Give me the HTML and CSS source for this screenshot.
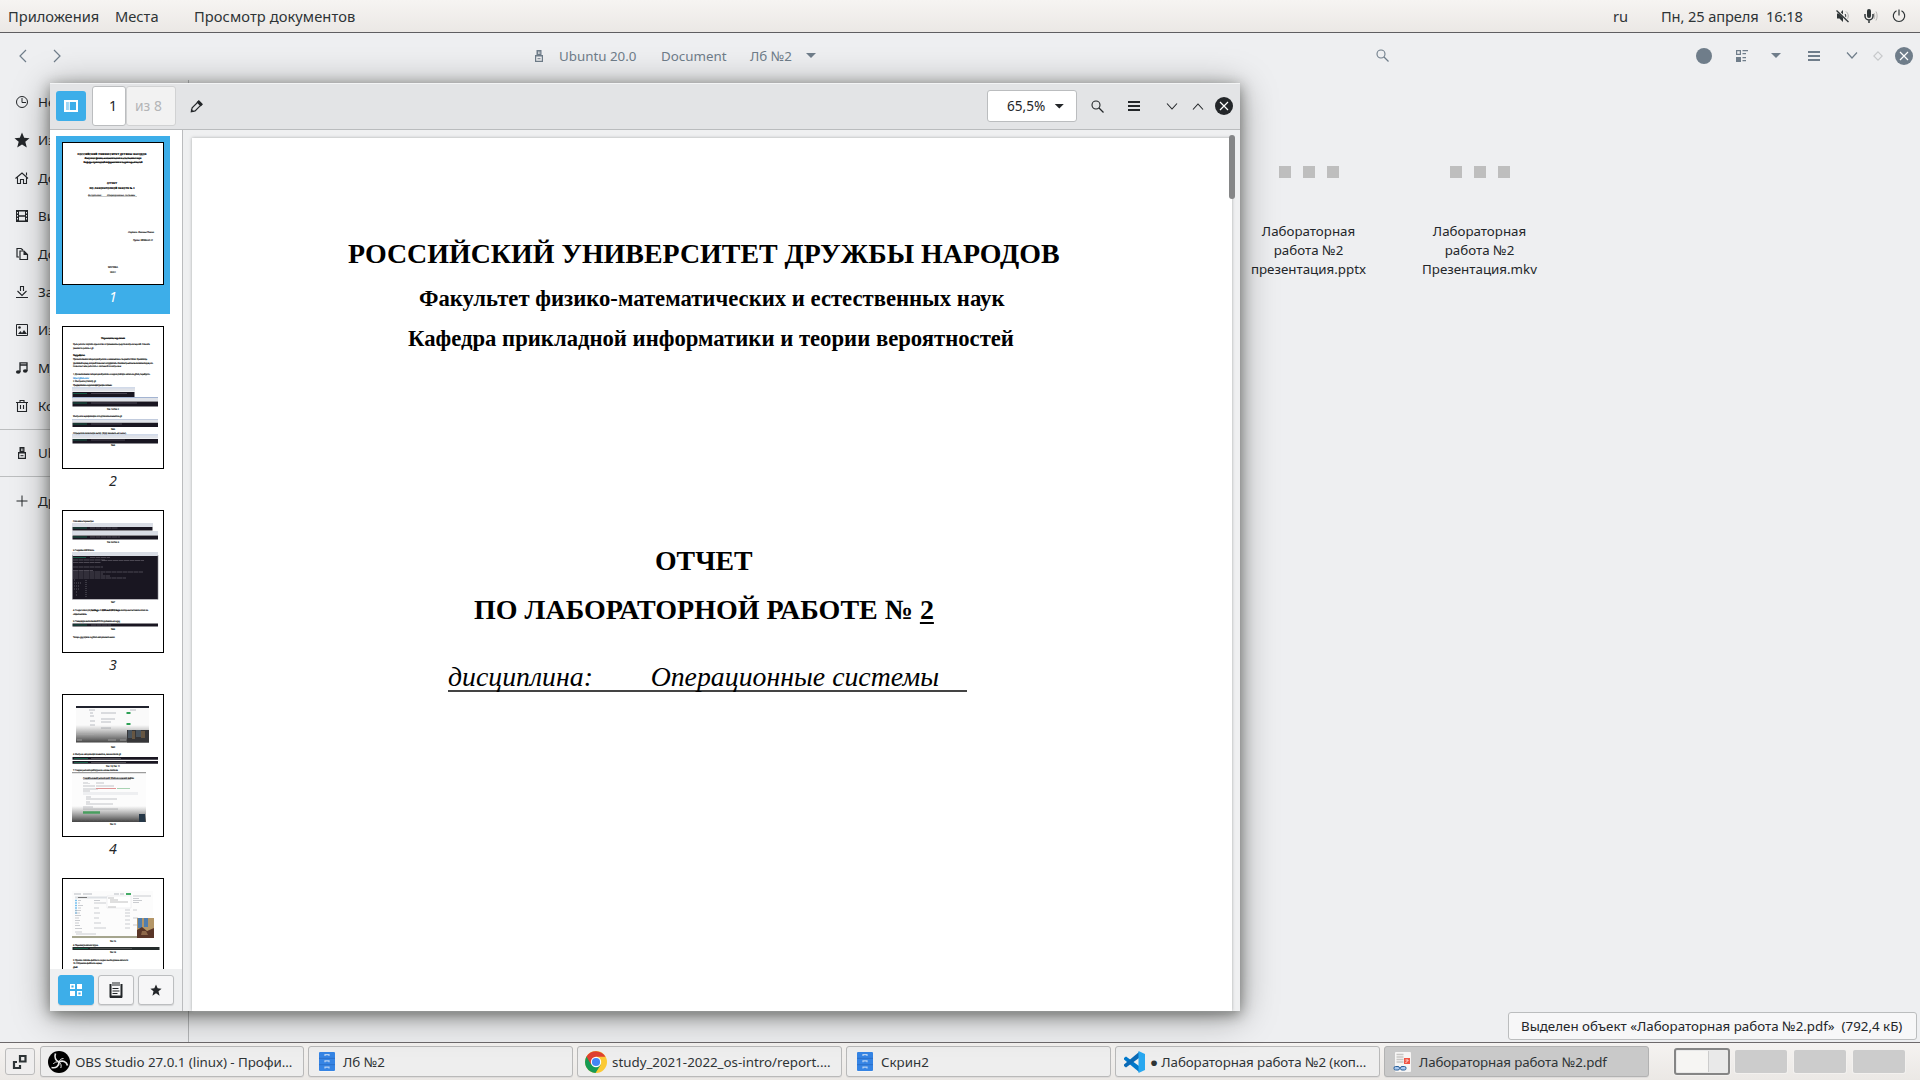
FILE: index.html
```html
<!DOCTYPE html>
<html lang="ru">
<head>
<meta charset="utf-8">
<title>Просмотр документов</title>
<link rel="stylesheet" href="styles.css">
</head>
<body>
<div class="desktop">
  <header class="top-panel">
    <span class="menu-apps">Приложения</span>
    <span class="menu-places">Места</span>
    <span class="menu-active">Просмотр документов</span>
    <span class="spacer"></span>
    <span class="lang">ru</span>
    <span class="clock">Пн, 25 апреля&nbsp; 16:18</span>
    <svg class="tray" width="14" height="14" viewBox="0 0 14 14"><path d="M1 4.500h2.500L7 1v12L3.500 9.500H1z" fill="#2e3436"/><path d="M9 5c1 1.200 1 2.800 0 4" fill="none" stroke="#2e3436"/><path d="M10 2.500c3 2.500 3 6.500 0 9" fill="none" stroke="#aaa"/><path d="M1 1l12 12" stroke="#f0eeec" stroke-width="2.400"/><path d="M.5 1.500l12 11.500" stroke="#2e3436" stroke-width="1.300"/></svg>
    <svg class="tray tray-mic" width="14" height="14" viewBox="0 0 14 14"><rect x="3" y="0" width="4" height="9" rx="2" fill="#2e3436"/><path d="M1 5v2a4 4 0 0 0 8 0V5M5 11v3" fill="none" stroke="#2e3436" stroke-width="1.500"/><path d="M10 4c1 2 1 4 0 6M12 2.500c1.500 3 1.500 6 0 9" fill="none" stroke="#b5b3b1"/></svg>
    <svg class="tray tray-power" width="14" height="14" viewBox="0 0 14 14"><path d="M4.500 1.700a5.700 5.700 0 1 0 5 0M7 .5v6" fill="none" stroke="#2e3436" stroke-width="1.200"/></svg>
  </header>

  <main class="workspace">
    <div class="fm-header">
      <svg class="nav-back" width="8" height="14" viewBox="0 0 8 14"><path d="M7 1L1 7l6 6" fill="none" stroke="#6f7d8a" stroke-width="1.200"/></svg>
      <svg class="nav-fwd" width="8" height="14" viewBox="0 0 8 14"><path d="M1 1l6 6-6 6" fill="none" stroke="#6f7d8a" stroke-width="1.200"/></svg>
      <svg class="crumb-usb" width="8" height="12" viewBox="0 0 8 12"><path d="M1.500 0h5v5H8v7H0V5h1.500zM3 1.500V4h.7V1.500zm1.500 0V4h.7V1.500zM1.200 6.500v4.300h5.600V6.500z" fill="#6f7d8a" fill-rule="evenodd"/><path d="M2.500 8.700h3" stroke="#6f7d8a"/></svg>
      <span class="crumb crumb-root">Ubuntu 20.0</span>
      <span class="crumb crumb-doc">Document</span>
      <span class="crumb crumb-cur">Лб №2</span>
      <i class="caret"></i>
      <span class="spacer"></span>
      <svg class="fm-search" width="13" height="13" viewBox="0 0 13 13"><circle cx="5" cy="5" r="4" fill="none" stroke="#6f7d8a" stroke-width="1.100"/><path d="M8 8l4.500 4.500" stroke="#6f7d8a" stroke-width="1.200"/></svg>
      <i class="fm-dot"></i>
      <svg class="fm-view" width="12" height="12" viewBox="0 0 12 12"><path d="M.6.6h3.800v3.800H.6z" fill="none" stroke="#6f7d8a" stroke-width="1.200"/><path d="M0 7h5v5H0z" fill="#6f7d8a"/><path d="M6.500.6H12M6.500 3.600H10M6.500 7.600H10M6.500 10.600H10" stroke="#6f7d8a" stroke-width="1.100"/></svg>
      <i class="caret fm-caret"></i>
      <svg class="fm-menu" width="12" height="10" viewBox="0 0 12 10"><path d="M0 0h12v2H0zM0 4h12v2H0zM0 8h12v2H0z" fill="#6f7d8a"/></svg>
      <svg class="fm-min" width="12" height="7" viewBox="0 0 12 7"><path d="M1 .5l5 5.500 5-5.500" fill="none" stroke="#6f7d8a" stroke-width="1.200"/></svg>
      <svg class="fm-max" width="10" height="10" viewBox="0 0 10 10"><path d="M5 .8L9.200 5 5 9.200.8 5z" fill="none" stroke="#c6c8ca" stroke-width="1.100"/></svg>
      <svg class="fm-close" width="18" height="18" viewBox="0 0 18 18"><circle cx="9" cy="9" r="9" fill="#6f7d8a"/><path d="M5 5l8 8M13 5l-8 8" stroke="#fff" stroke-width="1.200"/></svg>
    </div>
    <div class="fm-body">
      <nav class="places">
        <div class="place"><svg viewBox="0 0 16 16"><circle cx="8" cy="8" r="5.500" fill="none" stroke="#232629"/><path d="M8 4v4.500h4" fill="none" stroke="#232629"/></svg>Недавние</div>
        <div class="place"><svg viewBox="0 0 16 16"><path d="M8 .5l2.200 5.300 5.300.4-4.200 3.600 1.500 5.700L8 12.400l-4.800 3.100 1.500-5.700L.5 6.200l5.300-.4z" fill="#232629"/></svg>Избранные</div>
        <div class="place"><svg viewBox="0 0 16 16"><path d="M1.500 8.500L8 3l6 5.500M3.500 7.500v6h3v-4h3v4h3v-6M12.500 2.500v3" fill="none" stroke="#232629" stroke-width="1.100"/></svg>Домашняя папка</div>
        <div class="place"><svg viewBox="0 0 16 16"><path d="M2 2h12v12H2zM5 3.500v3.700h6V3.500zM5 8.800v3.700h6V8.800zM3 4v1.500h1V4zm0 3v1.500h1V7zm0 3v1.500h1V10zm9-6v1.500h1V4zm0 3v1.500h1V7zm0 3v1.500h1V10z" fill="#232629" fill-rule="evenodd"/></svg>Видео</div>
        <div class="place"><svg viewBox="0 0 16 16"><path d="M5 11H3V2.500h4L9 4M6 5h4l3.500 3.500v5H6z" fill="none" stroke="#232629" stroke-width="1.200"/><path d="M9.500 5v4H14z" fill="#232629"/></svg>Документы</div>
        <div class="place"><svg viewBox="0 0 16 16"><path d="M2 13.500h12M3.500 7L8 11.500 12.500 7M6.500 7V2.500h3V7" fill="none" stroke="#232629" stroke-width="1.100"/></svg>Загрузки</div>
        <div class="place"><svg viewBox="0 0 16 16"><path d="M2.500 2.500h11v11h-11z" fill="none" stroke="#232629"/><path d="M4 12l2.500-3L8 11l2-3 3 4z" fill="#232629"/><circle cx="5.500" cy="5.500" r="1.300" fill="#232629"/></svg>Изображения</div>
        <div class="place"><svg viewBox="0 0 16 16"><path d="M6 12V2.800h7V11M6 5h7" fill="none" stroke="#232629" stroke-width="1.300"/><ellipse cx="4.200" cy="12" rx="2.300" ry="1.800" fill="#232629"/><ellipse cx="11.200" cy="11" rx="2.300" ry="1.800" fill="#232629"/></svg>Музыка</div>
        <div class="place"><svg viewBox="0 0 16 16"><path d="M2 4.500h12M3.500 4.500v9h9v-9M6 4V2.500h4V4M6.500 7v4M9.500 7v4" fill="none" stroke="#232629" stroke-width="1.100"/></svg>Корзина</div>
        <div class="place place-drive"><svg viewBox="0 0 16 16"><path d="M5.500 2h5v5H12v7H4V7h1.500zM7 3.500V6h.7V3.500zm1.500 0V6h.7V3.500zM5.200 8.500v4.300h5.600V8.500z" fill="#232629" fill-rule="evenodd"/><path d="M6.500 10.700h3" stroke="#232629"/></svg>Ubuntu 20.0</div>
        <div class="place place-other"><svg viewBox="0 0 16 16"><path d="M2.500 8h11M8 2.500v11" stroke="#232629"/></svg>Другие места</div>
      </nav>
      <section class="files">
        <div class="file"><div class="loading"><i></i><i></i><i></i></div>Лабораторная<br>работа №2<br>презентация.pptx</div>
        <div class="file"><div class="loading"><i></i><i></i><i></i></div>Лабораторная<br>работа №2<br>Презентация.mkv</div>
      </section>
    </div>
    <div class="status">Выделен объект «Лабораторная работа №2.pdf»&nbsp; (792,4 кБ)</div>
  </main>

  <footer class="bottom-panel">
    <div class="show-desktop"><svg width="16" height="16" viewBox="0 0 16 16"><path d="M8 2h5.500v5.500H8z" fill="none" stroke="#2e3436" stroke-width="2.200"/><path d="M5 8H2v6h6v-3" fill="none" stroke="#2e3436" stroke-width="2.200"/></svg></div>
    <div class="task task-first">
      <svg width="22" height="22" viewBox="0 0 22 22"><circle cx="11" cy="11" r="11" fill="#000"/><path d="M7.500 2.500c-1.500 4 .5 7.300 3.500 8.500M11 11c3.500-2 7.500-.5 8.500 3.500M11 11c.3 4-3 6.500-7.500 5.500" fill="none" stroke="#e8e8e8" stroke-width="1.700"/><path d="M11 11c.5-2 2-3.500 4.500-3.500M11 11c-2.500-.5-4.500.2-5.700 2M11 11c2 1.500 2.700 3.500 1.800 6" fill="none" stroke="#e8e8e8" stroke-width="1"/></svg>
      <span class="t-obs">OBS Studio 27.0.1 (linux) - Профи...</span></div>
    <div class="task">
      <svg width="22" height="22" viewBox="0 0 22 22"><rect x="3" y="1" width="16" height="20" fill="#f5f5f5"/><rect x="3" y="1" width="16" height="19" rx="1" fill="#3584e4"/><path d="M3 7.300h16M3 13.700h16" stroke="#2a6fc9"/><path d="M9 5V3.600h4V5M9 11.300V9.900h4v1.400M9 17.600v-1.400h4v1.400" fill="none" stroke="#b8d2f2" stroke-width="1.200"/></svg>
      <span>Лб №2</span></div>
    <div class="task">
      <svg width="22" height="22" viewBox="0 0 22 22"><circle cx="11" cy="11" r="11" fill="#fbc934"/><path d="M11 11L1.500 5.500A11 11 0 0 0 10.500 22l5.200-8.300z" fill="#169b55"/><path d="M1.500 5.500A11 11 0 0 1 20.500 5.700H11l-4.800 8z" fill="#df4032"/><circle cx="11" cy="11" r="5.200" fill="#fff"/><circle cx="11" cy="11" r="4.100" fill="#4486f4"/></svg>
      <span class="t-study">study_2021-2022_os-intro/report....</span></div>
    <div class="task">
      <svg width="22" height="22" viewBox="0 0 22 22"><rect x="3" y="1" width="16" height="20" fill="#f5f5f5"/><rect x="3" y="1" width="16" height="19" rx="1" fill="#3584e4"/><path d="M3 7.300h16M3 13.700h16" stroke="#2a6fc9"/><path d="M9 5V3.600h4V5M9 11.300V9.900h4v1.400M9 17.600v-1.400h4v1.400" fill="none" stroke="#b8d2f2" stroke-width="1.200"/></svg>
      <span>Скрин2</span></div>
    <div class="task">
      <svg width="22" height="22" viewBox="0 0 22 22"><path d="M1 7l2-1.500L16 15v6L1 8.500z" fill="#0179cb"/><path d="M1 15l2 1.500L16 7V1L1 13.500z" fill="#0a6ab6"/><path d="M15.500 0L22 3v16l-6.500 3z" fill="#29a8f0"/></svg>
      <span class="t-code">● Лабораторная работа №2 (коп...</span></div>
    <div class="task task-active">
      <svg width="22" height="22" viewBox="0 0 22 22"><rect x="3" y="1" width="16" height="20" rx="1" fill="#f6f5f4"/><path d="M4.500 3.500h7M4.500 6h7M4.500 8.500h7M4.500 11h7" stroke="#c8c6c4" stroke-width="1.500"/><rect x="12" y="7" width="6" height="6" fill="#f05545"/><path d="M13.500 12l3-3M13.500 9h2.500" stroke="#fff" stroke-width=".8"/><rect x="2" y="15.500" width="5.500" height="3.500" rx="1.500" fill="#a9c8ee" stroke="#2a6099"/><rect x="8.500" y="15.500" width="5.500" height="3.500" rx="1.500" fill="#a9c8ee" stroke="#2a6099"/></svg>
      <span class="t-pdf">Лабораторная работа №2.pdf</span></div>
    <div class="pager">
      <div class="desk desk-active"><i></i></div><div class="desk"></div><div class="desk"></div><div class="desk"></div>
    </div>
  </footer>

  <section class="viewer">
    <div class="toolbar">
      <div class="side-toggle"><svg width="14" height="12" viewBox="0 0 14 12"><path d="M1 1h12v10H1z" fill="none" stroke="#fff" stroke-width="2"/><path d="M2 2h2.500v8H2z" fill="#9fd5f5"/><path d="M5.200 1v10" stroke="#fff" stroke-width="1.200"/></svg></div>
      <div class="page-num">1</div>
      <div class="page-total">из 8</div>
      <svg class="pencil" width="13" height="13" viewBox="0 0 14 14"><path d="M1.500 12.500l.8-4L8.500 2.300l3.200 3.200-6.200 6.200z" fill="none" stroke="#232629" stroke-width="1.300"/><path d="M7 2.500L9.500 0 14 4.500 11.500 7zM1 13v-3.500L4.500 13z" fill="#232629"/></svg>
      <span class="spacer"></span>
      <div class="zoom"><span>65,5%</span><i class="caret caret-dark"></i></div>
      <svg class="v-search" width="13" height="13" viewBox="0 0 13 13"><circle cx="5" cy="5" r="4" fill="none" stroke="#232629" stroke-width="1.100"/><path d="M8 8l4.500 4.500" stroke="#232629" stroke-width="1.200"/></svg>
      <svg class="v-menu" width="12" height="10" viewBox="0 0 12 10"><path d="M0 0h12v2H0zM0 4h12v2H0zM0 8h12v2H0z" fill="#232629"/></svg>
      <svg class="v-min" width="12" height="7" viewBox="0 0 12 7"><path d="M1 .5l5 5.500 5-5.500" fill="none" stroke="#232629" stroke-width="1.100"/></svg>
      <svg class="v-max" width="12" height="7" viewBox="0 0 12 7"><path d="M1 6.500L6 1l5 5.500" fill="none" stroke="#232629" stroke-width="1.100"/></svg>
      <svg class="v-close" width="18" height="18" viewBox="0 0 18 18"><circle cx="9" cy="9" r="9" fill="#232629"/><path d="M5 5l8 8M13 5l-8 8" stroke="#fff" stroke-width="1.200"/></svg>
    </div>
    <div class="viewer-body">
      <aside class="thumbs">
        <div class="thumb-list">
          <div class="thumb thumb-current">
            <svg viewBox="0 0 102 143" class="sheet"><g class="mini mid bold"><text x="50" y="13" textLength="69">РОССИЙСКИЙ УНИВЕРСИТЕТ ДРУЖБЫ НАРОДОВ</text><text x="51" y="17" textLength="57">Факультет физико-математических и естественных наук</text><text x="51" y="21" textLength="59">Кафедра прикладной информатики и теории вероятностей</text><text x="50" y="42" textLength="10">ОТЧЕТ</text><text x="50" y="47" textLength="45">ПО ЛАБОРАТОРНОЙ РАБОТЕ № 2</text></g><g class="mini ital"><text x="26" y="54" textLength="14">дисциплина:</text><text x="45" y="54" textLength="28">Операционные системы</text><path d="M26 54.500h49" stroke="#777" stroke-width=".4"/><text x="66" y="90.500" textLength="26">Студент: Логинова Полина</text><text x="71" y="98.500" textLength="20">Группа: НКНбд-01-21</text></g><g class="mini mid"><text x="51" y="126" textLength="10">МОСКВА</text><text x="51" y="130.500" textLength="6">2022 г.</text></g></svg>
            <span class="num">1</span>
          </div>
          <div class="thumb">
            <svg viewBox="0 0 102 143" class="sheet"><g class="mini"><text class="bold" x="39" y="13" textLength="24">Управление версиями</text><text x="11" y="19" textLength="77">Цель работы: изучить идеологию и применение средств контроля версий. Освоить</text><text x="11" y="23" textLength="21">умения по работе с git.</text><text class="bold" x="11" y="30" textLength="12">Ход работы:</text><text x="11" y="34" textLength="74">При выполнении лабораторной работы я ознакомилась с теорией и Github. Хранилище</text><text x="11" y="38" textLength="80">удалённый сервер, который позволяет сотрудничать с Вашим проектом нескольким людям, это</text><text x="11" y="41.300" textLength="48">позволяет мне работать с системой и контролем</text><text x="11" y="49" textLength="77">1. Для выполнения лабораторной работы я создала учётную запись на github, перейдя по</text><text class="link" x="11" y="53" textLength="16">https://github.com/</text><text x="11" y="56.300" textLength="23">2. Настроила утилиту git</text><text x="11" y="60.300" textLength="39">Предварительно создала конфигурацию системы</text><text x="45" y="84" textLength="12">Рис. 1 и Рис. 2</text><text x="11" y="91" textLength="49">Настроила верификацию и подписание коммитов git</text><text x="49" y="104" textLength="4">Рис.3</text><text x="11" y="108" textLength="53">Определила начальную ветку. (Буду называть её master)</text><text x="49" y="120" textLength="4">Рис.4</text></g>
            <g class="bar"><path d="M10 62h63M10 71.500h86M10 93.500h86M10 109h86"/></g><path d="M10.500 66h62v5h-62zM10.500 75.500h85.500v5h-85.500zM10.500 96.500h85.500v4.500h-85.500zM10.500 113h85.500v4.500h-85.500z" fill="#191621"/><path d="M10 64h63M10 73.500h86M10 95h86M10 111h86" stroke="#dfe2e8" stroke-width="3"/><path d="M11 67.500h14M11 77h14M11 98h14M11 114h14" stroke="#1b5d48"/><path d="M29 67.500h36M29 77h46M29 98h31M29 114h34" stroke="#696773" stroke-width=".6"/></svg>
            <span class="num">2</span>
          </div>
          <div class="thumb">
            <svg viewBox="0 0 102 143" class="sheet"><g class="mini"><text x="11" y="12" textLength="21">Основные параметры:</text><text x="45" y="33" textLength="12">Рис. 5 и Рис. 6</text><text x="11" y="41" textLength="21">3. Создание SSH Ключа</text><text x="49" y="93" textLength="4">Рис.7</text><text x="11" y="101" textLength="75">4. Создал ключ (id) <tspan class="bold">Settings -&gt; SSH and GPG keys</tspan> скопировал вставила ключ на</text><text x="11" y="104.500" textLength="14">открытом ключе.</text><text x="11" y="112" textLength="47">5. Сгенерирую выполненный PGP и добавляю его в gpg</text><text x="49" y="120" textLength="4">Рис.8</text><text x="11" y="128" textLength="42">Теперь gpg нужно в github авторизовать меня.</text></g>
            <path d="M10 15h81M10 23h86M10 44h86" stroke="#d9dde5" stroke-width="4"/><path d="M10.500 17h80v3.500h-80zM10.500 25.500h85.500v4h-85.500zM10.500 46h85.500v43h-85.500zM10.500 113.500h85.500v3h-85.500z" fill="#191621"/><path d="M10.500 45v44.500H96V45" fill="none" stroke="#85838b" stroke-width=".6"/><path d="M11 18h14M11 27h14M11 47.500h13M11 115h14" stroke="#1b5d48"/><path d="M28 18h28M28 27h30M28 47.500h20M29 115h20M11 50h32M11 52.500h28M40 50.500h42M11 57h30M11 60.500h20M11 62h70M11 64h30M11 66h37M11 68h53" stroke="#6e6b76" stroke-width=".6" stroke-dasharray="5 .5"/><path d="M12 70h1M12 73h7M12 76h6M12 79h5M14 82h2M14 85h2M24 70v18" stroke="#8c8991" stroke-width=".6" stroke-dasharray="1 1"/></svg>
            <span class="num">3</span>
          </div>
          <div class="thumb">
            <svg viewBox="0 0 102 143" class="sheet"><defs><linearGradient id="fade" x2="0" y2="1"><stop offset="0" stop-color="#666" stop-opacity="0"/><stop offset="1" stop-color="#444"/></linearGradient></defs><path d="M14 12h73v36.500H14z" fill="#fafafa"/><path d="M14 13h73" stroke="#20222d" stroke-width="2"/><path d="M27 16h6M39 19h15M39 25h14M39 28h10M28 19h3M28 22h4M28 27h5M39 34h10M28 31h5M68 16h6" stroke="#a9adb5" stroke-width=".8"/><path d="M64.500 19h4M64.500 30h4" stroke="#2da055" stroke-width="2"/><path d="M14 31h73v17.500H14z" fill="url(#fade)"/><path d="M65 36h22v12.500H65z" fill="#363638"/><path d="M66 36h4v8h-4zM74 36h5v7h-5z" fill="#49545e"/><path d="M70 37h3v8h-3zM79 37h4v7h-4z" fill="#665642"/><path d="M15 40h17M15 46h5M46 46h8M58 46h6" stroke="#aaa" stroke-width=".8"/><g class="mini"><text x="49" y="54" textLength="4">Рис.9</text><text x="11" y="61" textLength="48">6. Настрою авторизации коммитов, связав ключи git</text><text x="44" y="73" textLength="14">Рис. 10, Рис. 11</text><text x="11" y="77" textLength="45">7. Создаю репозиторий курса на основе шаблона</text></g><path d="M10.500 63h85.500v2.800h-85.500zM10.500 67h85.500v2.800h-85.500z" fill="#191621"/><path d="M12 64.500h14M12 68.500h14" stroke="#1b5d48"/><path d="M29 64.500h30M29 68.500h35" stroke="#777" stroke-width=".6"/><path d="M10 78.500h74V128H10z" fill="#fcfcfc"/><path d="M10 78.700h74" stroke="#858585"/><text class="mini" x="21" y="84.500" textLength="51">Создайте новый репозиторий. Шаблон содержит файлы</text><path d="M21 85.500h48M21 89h5M34 89h8M21 92h12M34 92h18M21 95h15M21 97h7M24 103h5M24 105h31M24 108h4M24 110h27M21 113h10M21 115h35M27 89v1" stroke="#aaadb3" stroke-width=".7"/><path d="M21 99.500h55" stroke="#eeeff1" stroke-width="3"/><path d="M34 94.500h20" stroke="#df9595"/><path d="M55 94.500h13" stroke="#a9d3b3"/><path d="M10 112h74v16H10z" fill="url(#fade)"/><path d="M21 118.500h17" stroke="#499e5f" stroke-width="2.500"/><path d="M77 120h6v8h-6z" fill="#253747"/><path d="M12 126.500h64" stroke="#555" stroke-dasharray="3 1"/><text class="mini" x="48" y="131" textLength="6">Рис. 12</text></svg>
            <span class="num">4</span>
          </div>
          <div class="thumb">
            <svg viewBox="0 0 102 143" class="sheet"><path d="M10 13h81v48H10z" fill="#fcfcfc"/><path d="M12 16h7M21 16h9M52 16h5M58 16h4" stroke="#b8bcc2"/><path d="M64 16h5" stroke="#259d4c" stroke-width="1.700"/><path d="M13 19.500h32" stroke="#dde0e4" stroke-width="2"/><path d="M16 19.500h9" stroke="#777"/><path d="M13 22.500h2M13 25h2M13 27.500h2M13 30h2M13 32.500h2M13 35h2" stroke="#79c1ef" stroke-width="1.500"/><path d="M16 22.500h3M16 25h2M16 27.500h5M16 30h3M13 32.500h6M13 35h5M13 37.500h6M13 40h4M13 42.500h5M13 45h4M13 47.500h5M13 50.500h7M13 54h7M32 22.500h6M32 25h12M32 30h5M32 35h6M32 40h5M32 45h7M32 50h12M63 32h5M63 35h5M63 38h5M63 42h5M63 46h5M63 50h5M71 18h18M71 20.500h6M71 22.500h9M71 24.500h6M71 32h4M71 40h5M71 47h5M14 56h20" stroke="#b5b8bd" stroke-width=".7"/><path d="M45 18h24v12H45z" fill="#fff" stroke="#e2e3e5" stroke-width=".5"/><path d="M46 20h6M48 22h8M48 24h18M46 29h8" stroke="#999" stroke-width=".6"/><path d="M10 58h65v2H10z" fill="#a5a58e"/><path d="M75 40h17v20H75z" fill="#b49667"/><path d="M76 40h4v10h-4zM82 40h4v9h-4z" fill="#507eae"/><path d="M75 52l5-3 5 4 7-3v10H75z" fill="#593527"/><path d="M80 53h4l2 4h-7z" fill="#8e6849"/><g class="mini"><text x="48" y="64" textLength="6">Рис. 13</text><text x="11" y="68" textLength="25">8. Перехожу в каталог курса</text><text x="48" y="75" textLength="6">Рис. 14</text><text x="11" y="83" textLength="55">9. Удаляю лишние файлы и создаю необходимые каталоги</text><text x="11" y="86" textLength="29">10. Отправляю файлы на сервер</text><text x="11" y="90" textLength="5">git add .</text></g><path d="M10.500 69h87v3h-87z" fill="#252c2c"/><path d="M12 70.500h14" stroke="#1b5d48"/><path d="M28 70.500h42" stroke="#666" stroke-width=".6"/></svg>
          </div>
        </div>
        <div class="side-modes">
          <div class="mode mode-on"><svg width="12" height="12" viewBox="0 0 12 12"><path d="M.7.7h3.600v3.600H.7zM7.700 7.700h3.600v3.600H7.700z" fill="none" stroke="#fff" stroke-width="1.400"/><path d="M7 0h5v5H7zM0 7h5v5H0z" fill="#fff"/></svg></div>
          <div class="mode"><svg width="14" height="16" viewBox="0 0 14 16"><path d="M1.500 2v12.500h11V2" fill="none" stroke="#232629" stroke-width="2"/><path d="M1 15h12" stroke="#232629" stroke-width="2"/><path d="M4 0v4M6 0v4M8 0v4M10 0v4M3.500 6.500h6M3.500 9h7M3.500 11.500h5" stroke="#232629"/></svg></div>
          <div class="mode"><svg width="12" height="12" viewBox="0 0 16 16"><path d="M8 .5l2.200 5.300 5.300.4-4.200 3.600 1.500 5.700L8 12.400l-4.800 3.100 1.500-5.700L.5 6.200l5.300-.4z" fill="#232629"/></svg></div>
        </div>
      </aside>
      <div class="canvas">
        <article class="page">
          <h1 class="line university">РОССИЙСКИЙ УНИВЕРСИТЕТ ДРУЖБЫ НАРОДОВ</h1>
          <p class="line faculty">Факультет физико-математических и естественных наук</p>
          <p class="line department">Кафедра прикладной информатики и теории вероятностей</p>
          <h2 class="line report">ОТЧЕТ</h2>
          <h2 class="line work">ПО ЛАБОРАТОРНОЙ РАБОТЕ № <span class="work-no">2</span></h2>
          <p class="subject"><span>дисциплина:</span><span>Операционные системы</span></p>
        </article>
        <i class="scrollbar"></i>
      </div>
    </div>
  </section>
</div>
</body>
</html>
```
FILE: styles.css
```css
* { box-sizing: border-box; }
html, body { margin: 0; height: 100%; overflow: hidden; }
body { font: 13.33px/18px "Noto Sans", "Open Sans", sans-serif; color: #232629; }
svg { display: block; flex: none; }
i { display: block; flex: none; }
.spacer { flex: 1; }
.desktop { position: relative; width: 1920px; height: 1080px; display: flex; flex-direction: column; background: #eeeff1; white-space: nowrap; }

/* Top panel */
.top-panel { height: 33px; flex: none; display: flex; align-items: center; border-bottom: 1px solid #5f5e61; background: linear-gradient(#f6f4f2, #ebe8e5); color: #2e3436; font-size: 14.67px; padding: 0 14px 0 8px; }
.menu-apps { width: 107px; }
.menu-places { width: 79px; }
.menu-active { letter-spacing: .08px; }
.lang { margin-right: 33px; }
.clock { width: 142px; margin-right: 33px; letter-spacing: -.12px; }
.tray-mic { margin-left: 14px; }
.tray-power { margin-left: 14px; }

/* File manager */
.workspace { flex: 1; display: flex; flex-direction: column; min-height: 0; }
.fm-header { height: 47px; flex: none; display: flex; align-items: center; padding: 0 8px 2px 19px; color: #6f7d8a; }
.nav-fwd { margin-left: 26px; }
.crumb-usb { margin-left: 474px; }
.crumb-root { width: 102px; margin-left: 16px; }
.crumb-doc { width: 89px; }
.crumb-cur { width: 56px; }
.caret { width: 10px; height: 5px; background: #6f7d8a; clip-path: polygon(0 0, 100% 0, 50% 100%); }
.caret-dark { background: #232629; }
.fm-search { margin-right: 307px; }
.fm-dot { width: 16px; height: 16px; border-radius: 50%; background: #6f7d8a; }
.fm-view { margin-left: 24px; }
.fm-caret { margin-left: 23px; }
.fm-menu { margin-left: 27px; }
.fm-min { margin-left: 26px; }
.fm-max { margin-left: 15px; }
.fm-close { margin-left: 12px; margin-right: -1px; }
.fm-body { flex: 1; display: flex; min-height: 0; }
.places { width: 189px; padding-top: 3px; border-right: 1px solid #b4b6b8; }
.place { height: 38px; display: flex; align-items: center; gap: 8px; padding-left: 14px; }
.place svg { width: 16px; height: 16px; }
.place-drive { height: 48px; margin-top: 4px; border-top: 1px solid #bcbebf; border-bottom: 1px solid #bcbebf; }
.place-other { height: 47px; }
.files { flex: 1; display: flex; padding: 85px 0 0 1034px; align-items: flex-start; }
.file { width: 171px; text-align: center; line-height: 19px; }
.loading { display: flex; justify-content: center; gap: 12px; padding: 1px 0 44px; }
.loading i { width: 12px; height: 12px; background: #bebebe; }
.status { position: absolute; left: 1508px; top: 1012px; width: 409px; height: 28px; padding: 0 12px; border: 1px solid #bbbdbe; border-radius: 3px; background: #f7f7f8; line-height: 27px; }

/* Bottom panel */
.bottom-panel { height: 38px; flex: none; display: flex; align-items: center; padding: 0 15px 0 5px; border-top: 1px solid #6d696b; background: linear-gradient(#f5f3f1, #ebe8e5); color: #2e3436; }
.show-desktop { width: 30px; height: 27px; margin-right: 5px; display: grid; place-items: center; border: 1px solid #bcbcbc; border-radius: 3px; background: #efeeee; }
.task { width: 265px; height: 31px; margin-right: 4px; padding: 1px 7px 0; display: flex; align-items: center; gap: 5px; border: 1px solid #b9b9b9; border-radius: 3px; background: #eee; box-shadow: 0 1px #dedcdb; }
.task-first { width: 264px; }
.task-active { background: #c9c9c9; border-color: #b2b2b2; }
.t-obs { letter-spacing: -.04px; }
.t-code { letter-spacing: -.08px; }
.t-pdf { letter-spacing: -.12px; }
.pager { flex: 1; display: flex; align-items: center; justify-content: flex-end; gap: 7px; }
.desk { width: 52px; height: 23px; border-radius: 2px; background: #ccc; box-shadow: 0 0 0 1px #f3f1ef; }
.desk-active { width: 56px; height: 27px; margin-right: -2px; padding: 1px; border: 2px solid #858585; border-radius: 3px; background: #e9e9e9; }
.desk-active i { width: 32px; height: 21px; border-right: 1px solid #ccc; background: #f6f5f3; }

/* Document viewer window */
.viewer { position: absolute; left: 50px; top: 83px; width: 1190px; height: 928px; display: flex; flex-direction: column; background: #eff0f1; box-shadow: 0 5px 34px rgba(0, 0, 0, .38), 0 3px 13px rgba(30, 34, 24, .48); }
.toolbar { height: 47px; flex: none; display: flex; align-items: center; padding: 0 7px 0 6px; background: #e3e4e6; border-bottom: 1px solid #babcbe; box-shadow: inset 0 1px #f3f4f5; }
.side-toggle { width: 30px; height: 30px; display: grid; place-items: center; border-radius: 3px; background: #3daee9; }
.page-num { width: 34px; height: 40px; margin-left: 6px; padding-right: 8px; border: 1px solid #bbbdbf; border-radius: 3px; background: #fff; line-height: 38px; text-align: right; font-size: 14.2px; }
.page-total { width: 50px; height: 40px; padding-left: 8px; border: 1px solid #d1d2d3; border-radius: 3px; background: #f2f2f2; color: #b4b5b7; line-height: 38px; font-size: 13.8px; }
.pencil { margin-left: 14px; }
.zoom { width: 90px; height: 32px; display: flex; align-items: center; gap: 9px; padding-left: 19px; border: 1px solid #bbbdbf; border-radius: 3px; background: #fff; font-size: 13.6px; }
.v-search { margin-left: 14px; }
.v-menu { margin-left: 24px; }
.v-min { margin-left: 26px; }
.v-max { margin-left: 14px; }
.v-close { margin-left: 11px; }
.viewer-body { flex: 1; display: flex; min-height: 0; }
.thumbs { width: 133px; display: flex; flex-direction: column; border-right: 1px solid #bbbcbe; }
.thumb-list { flex: 1; min-height: 0; padding: 6px 0 0 6px; overflow: hidden; background: #fff; }
.thumb { width: 114px; height: 178px; margin-bottom: 6px; padding-top: 6px; display: flex; flex-direction: column; align-items: center; }
.thumb-current { background: #3daee9; color: #fff; }
.sheet { width: 102px; height: 143px; background: #fff; outline: 1px solid #000; outline-offset: -1px; }
.num { margin-top: 3px; font-size: 14.2px; font-style: italic; }
.mini { font: 2.5px "Liberation Serif", serif; fill: #111; stroke: #111; stroke-width: .12; text-rendering: geometricPrecision; }
.mid { text-anchor: middle; }
.mini.bold, .bold { font-weight: bold; stroke-width: .22; }
.mini.ital { font-style: italic; }
.link { fill: #258ad8; stroke: #258ad8; }
.bar { fill: none; stroke: #a3b4d2; stroke-width: 1; }
.side-modes { height: 42px; display: flex; gap: 4px; padding: 6px 0 0 8px; background: #eff0f1; }
.mode { width: 36px; height: 30px; display: grid; place-items: center; border: 1px solid #bcbec0; border-radius: 3px; background: #f6f6f7; box-shadow: 0 1px 1px #d4d5d6; }
.mode-on { background: #3daee9; border-color: #3daee9; }
.canvas { position: relative; flex: 1; padding: 8px 8px 0 9px; }
.page { height: 873px; padding-top: 96px; overflow: hidden; background: #fff; color: #000; font-family: "Liberation Serif", "Times New Roman", serif; box-shadow: 0 0 3px #a7a8a9; }
.scrollbar { position: absolute; top: 5px; right: 5px; width: 6px; height: 64px; border-radius: 3px; background: #858687; }
.line { margin: 0; height: 40px; line-height: 40px; font-weight: bold; }
.university { padding-left: 156px; font-size: 27.92px; }
.faculty { margin-top: 5px; padding-left: 227px; font-size: 22.7px; }
.department { padding-left: 216px; font-size: 22.7px; }
.report { margin-top: 182px; padding-left: 463px; font-size: 27.8px; }
.work { margin-top: 9px; padding-left: 282px; font-size: 28px; }
.work-no { text-decoration: underline; text-decoration-thickness: 2px; text-underline-offset: 3px; }
.subject { width: 519px; height: 35px; margin: 27px 0 0 256px; padding-right: 28px; display: flex; justify-content: space-between; border-bottom: 2px solid #444; font-size: 27.8px; font-style: italic; line-height: 40px; }
```
